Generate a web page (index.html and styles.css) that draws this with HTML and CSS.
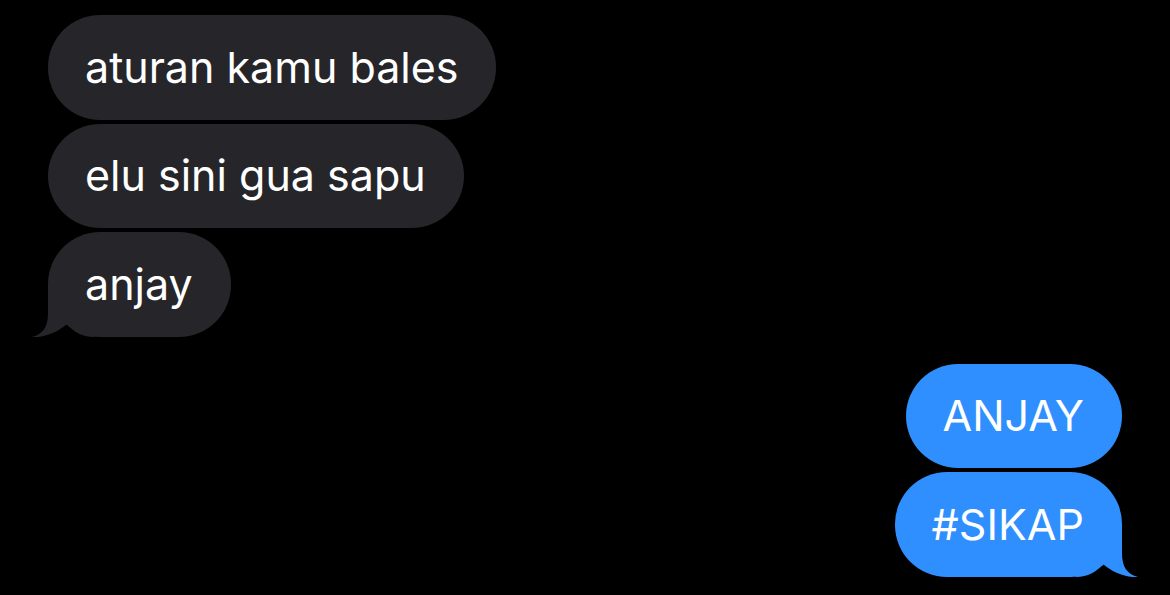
FILE: index.html
```html
<!DOCTYPE html>
<html>
<head>
<meta charset="utf-8">
<link rel="stylesheet" href="styles.css">
</head>
<body>
<div class="thread">
  <div class="group in">
    <div class="bubble"><span>aturan kamu bales</span></div>
    <div class="bubble"><span>elu sini gua sapu</span></div>
    <div class="bubble tailed"><svg class="tail" width="70" height="52" viewBox="0 0 70 52"><path d="M16 0 L16 28 C16 42 11 49 0 52 C12 53 26 47 35 39 C42 47 50 52 62 52 L62 0 Z"/></svg><span>anjay</span></div>
  </div>
  <div class="group out">
    <div class="bubble"><span>ANJAY</span></div>
    <div class="bubble tailed"><svg class="tail" width="70" height="52" viewBox="0 0 70 52"><path d="M54 0 L54 28 C54 42 59 49 70 52 C58 53 44 47 35 39 C28 47 20 52 8 52 L8 0 Z"/></svg><span>#SIKAP</span></div>
  </div>
</div>
</body>
</html>
```
FILE: styles.css
```css
html, body {
  margin: 0;
  padding: 0;
  background: #000;
}
body {
  width: 1170px;
  height: 595px;
  overflow: hidden;
  font-family: Inter, "Noto Sans", sans-serif;
}
.thread {
  display: flex;
  flex-direction: column;
  gap: 27px;
  padding: 15px 48px 0 48px;
}
.group {
  display: flex;
  flex-direction: column;
  gap: 4px;
}
.group.in { align-items: flex-start; }
.group.out { align-items: flex-end; }
.bubble {
  position: relative;
  box-sizing: border-box;
  height: 104.5px;
  border-radius: 52px;
  padding: 0 38px 0 37px;
  display: flex;
  align-items: center;
  font-size: 43px;
  color: #fff;
  line-height: 1;
}
.in .bubble { background: #262529; }
.out .bubble { background: #2f8ffe; padding: 0 38px 0 37px; }
.tail {
  position: absolute;
  bottom: 0;
}
.in .tail { left: -16px; fill: #262529; }
.out .tail { right: -16px; fill: #2f8ffe; }
.bubble > span { position: relative; }
```
